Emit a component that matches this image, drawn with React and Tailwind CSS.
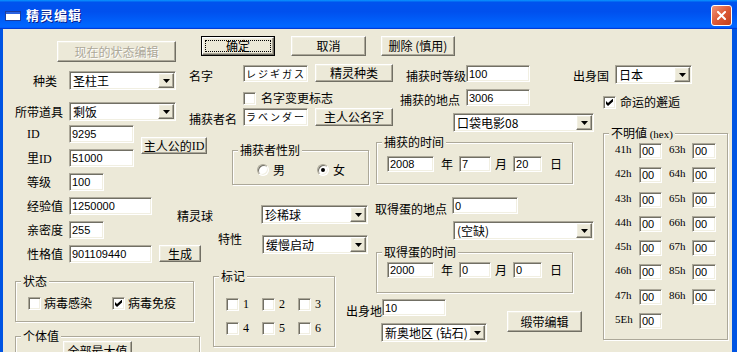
import React from "react";

const sunken =
  "bg-white border border-t-[#ACA899] border-l-[#ACA899] border-b-white border-r-white shadow-[inset_1px_1px_0_#716F64,inset_-1px_-1px_0_#F1EFE2]";
const raised =
  "bg-[#ECE9D8] border border-t-white border-l-white border-b-[#716F64] border-r-[#716F64] shadow-[inset_-1px_-1px_0_#ACA899,inset_1px_1px_0_#F1EFE2]";
const serif = "font-['Liberation_Serif',serif]";
const num = "font-['Liberation_Sans',sans-serif] text-[11px]";
const jp = "font-['Noto_Sans_CJK_JP',sans-serif] text-[10px] tracking-[2px]";

function Field({ value = "", className = "", kana }) {
  return (
    <div
      className={`${sunken} shrink-0 flex items-center pl-[2px] whitespace-nowrap ${kana ? jp : num} ${className}`}
    >
      {value}
    </div>
  );
}

function Combo({ value, className = "" }) {
  return (
    <div className={`${sunken} shrink-0 flex items-center p-[1px] h-[19px] ${className}`}>
      <span className="flex-1 pl-[2px] whitespace-nowrap leading-[14px]">{value}</span>
      <div className={`${raised} w-[16px] h-full shrink-0 flex items-center justify-center`}>
        <svg width="7" height="4" viewBox="0 0 7 4">
          <path d="M0 0H7L3.5 4Z" fill="#000" />
        </svg>
      </div>
    </div>
  );
}

function Btn({ children, className = "", disabled, def }) {
  if (def) {
    return (
      <div className={`shrink-0 border border-black flex ${className}`}>
        <div className={`${raised} flex-1 flex p-[2px]`}>
          <div className="flex-1 border border-dotted border-black flex items-center justify-center whitespace-nowrap">
            {children}
          </div>
        </div>
      </div>
    );
  }
  const face = disabled ? "text-[#ACA899] [text-shadow:1px_1px_0_#fff]" : "text-black";
  return (
    <div className={`shrink-0 ${raised} flex items-center justify-center whitespace-nowrap ${face} ${className}`}>
      {children}
    </div>
  );
}

function Check({ checked, className = "" }) {
  return (
    <div className={`${sunken} shrink-0 w-[13px] h-[13px] flex items-center justify-center ${className}`}>
      {checked && (
        <svg width="7" height="7" viewBox="0 0 7 7">
          <path d="M0 2L2 4L7 -0.5V2.5L2 7L0 5Z" fill="#000" />
        </svg>
      )}
    </div>
  );
}

function Radio({ checked, className = "" }) {
  return (
    <div
      className={`shrink-0 w-[12px] h-[12px] rounded-full bg-white border border-t-[#ACA899] border-l-[#ACA899] border-b-white border-r-white shadow-[inset_1px_1px_0_#716F64,inset_-1px_-1px_0_#F1EFE2] flex items-center justify-center ${className}`}
    >
      {checked && <div className="w-[4px] h-[4px] rounded-full bg-black" />}
    </div>
  );
}

function Group({ title, className = "", children }) {
  return (
    <fieldset className={`shrink-0 border border-[#ACA899] shadow-[inset_1px_1px_0_#fff,1px_1px_0_#fff] ${className}`}>
      <legend className="ml-[5px] px-[2px] bg-[#ECE9D8] leading-[14px] whitespace-nowrap">{title}</legend>
      {children}
    </fieldset>
  );
}

function DateRow({ y, m, d, className = "" }) {
  return (
    <div className={`flex items-center ${className}`}>
      <Field value={y} className="ml-[10px] w-[47px] h-[16px]" />
      <span className="ml-[7px]">年</span>
      <Field value={m} className="ml-[6px] w-[32px] h-[16px]" />
      <span className="ml-[4px]">月</span>
      <Field value={d} className="ml-[6px] w-[29px] h-[16px]" />
      <span className="ml-[8px]">日</span>
    </div>
  );
}

function TitleBar() {
  return (
    <div className="h-[29px] shrink-0 flex items-center bg-[linear-gradient(180deg,#0997ff,#0053ee_8%,#0050ee_40%,#0066ff_88%,#0066ff_93%,#005bff_95%,#003dd7_96%,#003dd7)]">
      <svg className="ml-[5px] mt-[2px]" width="16" height="10" viewBox="0 0 16 10">
        <rect x="0.5" y="0.5" width="15" height="9" fill="#fff" stroke="#1c3c9c" />
        <rect x="1" y="1" width="14" height="2" fill="#2a62e0" />
      </svg>
      <span className="ml-[5px] text-white font-bold text-[13px] tracking-[1px] [text-shadow:1px_1px_0_#0a1e8c]">
        精灵编辑
      </span>
      <div className="ml-auto mr-[5px] self-start mt-[5px] w-[21px] h-[21px] rounded-[3px] border border-white bg-[linear-gradient(135deg,#f0947a,#dc5a36_50%,#c2401c)] flex items-center justify-center">
        <svg width="9" height="9" viewBox="0 0 9 9">
          <path d="M1 1L8 8M8 1L1 8" stroke="#fff" strokeWidth="2" strokeLinecap="square" />
        </svg>
      </div>
    </div>
  );
}

function ColA() {
  return (
    <div className="w-[172px] shrink-0 flex flex-col">
      <Btn disabled className="ml-[54px] mt-[12px] w-[119px] h-[21px]">
        现在的状态编辑
      </Btn>
      <div className="mt-[9px] flex items-center">
        <span className="w-[66px] pl-[30px] shrink-0">种类</span>
        <Combo value="圣柱王" className="w-[107px]" />
      </div>
      <div className="mt-[12px] flex items-center">
        <span className="w-[66px] pl-[12px] shrink-0">所带道具</span>
        <Combo value="剩饭" className="w-[107px]" />
      </div>
      <div className="mt-[4px] flex items-start">
        <div className="flex flex-col gap-[6px]">
          <div className="flex items-center">
            <span className={`w-[66px] pl-[24px] shrink-0 ${serif}`}>ID</span>
            <Field value="9295" className="w-[65px] h-[18px]" />
          </div>
          <div className="flex items-center">
            <span className="w-[66px] pl-[24px] shrink-0">
              里<span className={serif}>ID</span>
            </span>
            <Field value="51000" className="w-[65px] h-[18px]" />
          </div>
        </div>
        <Btn className="ml-[7px] mt-[12px] w-[66px] h-[17px]">
          主人公的<span className={serif}>ID</span>
        </Btn>
      </div>
      <div className="mt-[6px] flex items-center">
        <span className="w-[66px] pl-[24px] shrink-0">等级</span>
        <Field value="100" className="w-[35px] h-[18px]" />
      </div>
      <div className="mt-[6px] flex items-center">
        <span className="w-[66px] pl-[24px] shrink-0">经验值</span>
        <Field value="1250000" className="w-[83px] h-[18px]" />
      </div>
      <div className="mt-[6px] flex items-center">
        <span className="w-[66px] pl-[24px] shrink-0">亲密度</span>
        <Field value="255" className="w-[35px] h-[18px]" />
      </div>
      <div className="mt-[6px] flex items-start">
        <span className="w-[66px] pl-[24px] mt-[2px] shrink-0">性格值</span>
        <Field value="901109440" className="w-[83px] h-[18px]" />
        <Btn className="ml-[7px] w-[42px] h-[17px]">生成</Btn>
      </div>
      <Group title="状态" className="mt-[11px] ml-[12px] w-[179px] h-[48px]">
        <div className="mt-[8px] flex items-center">
          <Check className="ml-[12px]" />
          <span className="ml-[3px]">病毒感染</span>
          <Check checked className="ml-[20px]" />
          <span className="ml-[3px]">病毒免疫</span>
        </div>
      </Group>
      <Group title="个体值" className="mt-[7px] ml-[12px] w-[185px] h-[40px]">
        <Btn className="mt-[-2px] ml-[47px] w-[69px] h-[20px]">全部最大值</Btn>
      </Group>
    </div>
  );
}

function ColB() {
  const marks = [
    ["1", "2", "3"],
    ["4", "5", "6"],
  ];
  return (
    <div className="w-[198px] shrink-0 flex flex-col">
      <div className="mt-[7px] flex">
        <Btn def className="ml-[26px] w-[74px] h-[20px]">
          确定
        </Btn>
        <Btn className="ml-[16px] w-[75px] h-[20px]">取消</Btn>
      </div>
      <div className="mt-[8px] flex items-start">
        <span className="ml-[14px] mt-[5px] w-[54px] shrink-0">名字</span>
        <Field kana value="レジギガス" className="mt-[1px] w-[65px] h-[17px]" />
        <Btn className="ml-[7px] w-[78px] h-[18px]">精灵种类</Btn>
      </div>
      <div className="mt-[8px] flex items-center">
        <Check className="ml-[68px]" />
        <span className="ml-[5px]">名字变更标志</span>
      </div>
      <div className="mt-[3px] flex items-start">
        <span className="ml-[14px] mt-[4px] w-[54px] shrink-0">捕获者名</span>
        <Field kana value="ラベンダー" className="w-[65px] h-[18px]" />
        <Btn className="ml-[7px] w-[78px] h-[18px]">主人公名字</Btn>
      </div>
      <Group title="捕获者性别" className="mt-[17px] ml-[57px] w-[137px] h-[42px]">
        <div className="mt-[6px] flex items-center">
          <Radio className="ml-[24px]" />
          <span className="ml-[4px]">男</span>
          <Radio checked className="ml-[32px]" />
          <span className="ml-[4px]">女</span>
        </div>
      </Group>
      <div className="mt-[20px] flex items-start">
        <span className="ml-[2px] mt-[4px] w-[84px] shrink-0">精灵球</span>
        <Combo value="珍稀球" className="w-[107px]" />
      </div>
      <div className="mt-[11px] flex items-start">
        <span className="ml-[43px] mt-[-3px] w-[44px] shrink-0">特性</span>
        <Combo value="缓慢启动" className="w-[106px]" />
      </div>
      <Group title="标记" className="mt-[15px] ml-[38px] w-[120px] h-[78px]">
        <div className="mt-[14px] flex flex-col gap-[10px]">
          {marks.map((row) => (
            <div key={row[0]} className="flex ml-[12px]">
              {row.map((n) => (
                <div key={n} className="w-[36px] flex items-center">
                  <Check />
                  <span className={`ml-[4px] ${serif}`}>{n}</span>
                </div>
              ))}
            </div>
          ))}
        </div>
      </Group>
    </div>
  );
}

function ColC() {
  return (
    <div className="w-[197px] shrink-0 flex flex-col">
      <Btn className="mt-[7px] ml-[8px] w-[74px] h-[20px]">删除 (慎用)</Btn>
      <div className="mt-[9px] flex items-start">
        <span className="ml-[33px] mt-[4px] w-[60px] shrink-0">捕获时等级</span>
        <Field value="100" className="w-[64px] h-[17px]" />
      </div>
      <div className="mt-[6px] flex items-start">
        <span className="ml-[27px] mt-[4px] w-[66px] shrink-0">捕获的地点</span>
        <Field value="3006" className="w-[64px] h-[17px]" />
      </div>
      <Combo value="口袋电影08" className="mt-[6px] ml-[80px] w-[141px]" />
      <Group title="捕获的时间" className="mt-[3px] ml-[3px] w-[197px] h-[49px]">
        <DateRow y="2008" m="7" d="20" className="mt-[7px]" />
      </Group>
      <div className="mt-[13px] flex items-start">
        <span className="ml-[2px] mt-[5px] w-[77px] shrink-0">取得蛋的地点</span>
        <Field value="0" className="w-[66px] h-[17px]" />
      </div>
      <Combo value="(空缺)" className="mt-[5px] ml-[80px] w-[141px]" />
      <Group title="取得蛋的时间" className="mt-[5px] ml-[3px] w-[197px] h-[48px]">
        <DateRow y="2000" m="0" d="0" className="mt-[3px]" />
      </Group>
      <div className="mt-[6px] flex items-start">
        <div className="w-[114px] shrink-0 flex flex-col">
          <div className="flex items-start">
            <span className="ml-[-27px] mt-[5px] w-[36px] shrink-0">出身地</span>
            <Field value="10" className="w-[64px] h-[17px]" />
          </div>
          <Combo value="新奥地区 (钻石)" className="mt-[5px] ml-[8px] w-[106px]" />
        </div>
        <Btn className="ml-[20px] mt-[12px] w-[75px] h-[21px]">缎带编辑</Btn>
      </div>
    </div>
  );
}

function ColD() {
  const rows = [
    ["41h", "63h"],
    ["42h", "64h"],
    ["43h", "65h"],
    ["44h", "66h"],
    ["45h", "67h"],
    ["46h", "85h"],
    ["47h", "86h"],
    ["5Eh", null],
  ];
  return (
    <div className="w-[162px] shrink-0 flex flex-col">
      <div className="mt-[36px] flex items-start">
        <span className="ml-[3px] mt-[4px] w-[42px] shrink-0">出身国</span>
        <Combo value="日本" className="w-[77px]" />
      </div>
      <div className="mt-[11px] ml-[33px] flex items-center">
        <Check checked />
        <span className="ml-[4px]">命运的邂逅</span>
      </div>
      <Group
        title={
          <>
            不明値 <span className={`${serif} text-[11px]`}>(hex)</span>
          </>
        }
        className="mt-[17px] ml-[33px] w-[125px] h-[214px]"
      >
        <div className="mt-[2px] flex flex-col gap-[8.3px]">
          {rows.map(([a, b]) => (
            <div key={a} className="flex items-start h-[16px]">
              <span className={`ml-[11px] w-[24px] shrink-0 leading-[13px] text-[11px] ${serif}`}>{a}</span>
              <Field value="00" className="w-[23px] h-[16px]" />
              {b && (
                <>
                  <span className={`ml-[7px] w-[23px] shrink-0 leading-[13px] text-[11px] ${serif}`}>{b}</span>
                  <Field value="00" className="w-[24px] h-[16px]" />
                </>
              )}
            </div>
          ))}
        </div>
      </Group>
    </div>
  );
}

export default function App() {
  return (
    <div className="w-[737px] h-[352px] overflow-hidden bg-[#0054E3] flex flex-col text-black text-[12px] leading-[14px] font-['Noto_Sans_CJK_SC','Noto_Sans_CJK_JP',sans-serif]">
      <TitleBar />
      <div className="flex-1 ml-[3px] mr-[5px] bg-[#ECE9D8] flex overflow-hidden">
        <ColA />
        <ColB />
        <ColC />
        <ColD />
      </div>
    </div>
  );
}
